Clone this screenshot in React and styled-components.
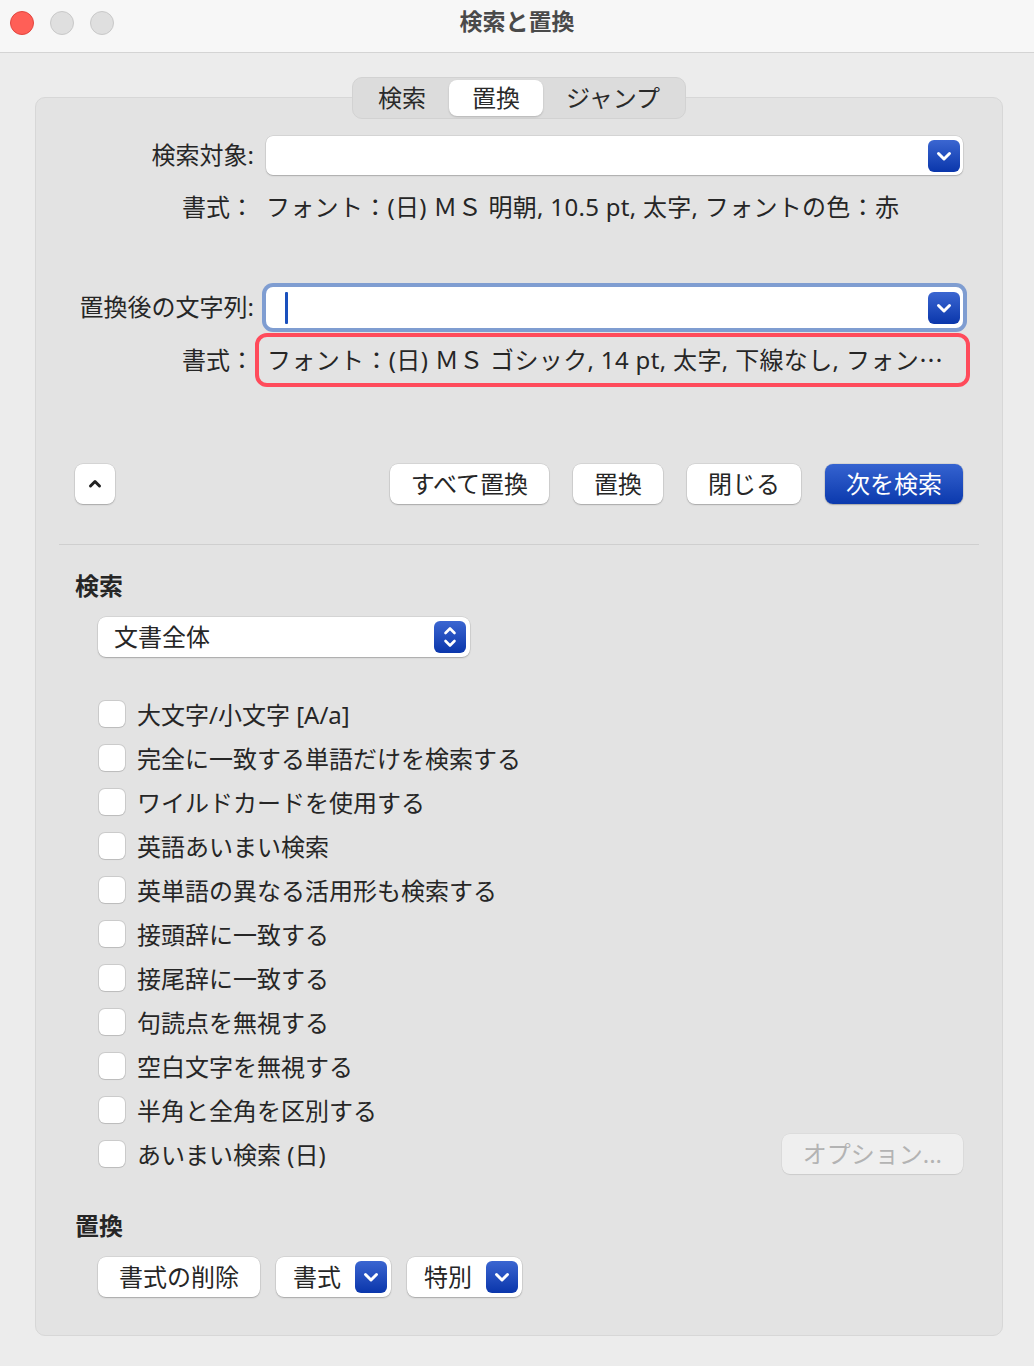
import React from 'react';
import styled, { createGlobalStyle } from 'styled-components';

const Global = createGlobalStyle`
  html, body { margin: 0; padding: 0; background: #ececec; }
  body {
    font-family: "Noto Sans", "Noto Sans CJK JP", sans-serif;
    color: #262626;
  }
`;

const Window = styled.div`
  width: 1034px;
  height: 1366px;
  background: #ececec;
  overflow: hidden;
`;

const TitleBar = styled.div`
  height: 52px;
  background: #f7f7f7;
  border-bottom: 1px solid #d4d4d4;
  display: grid;
  grid-template-columns: 1fr auto 1fr;
  align-items: center;
  padding: 0 10px;
`;

const Lights = styled.div`
  display: flex;
  gap: 16px;
  margin-top: -6px;
`;

const Light = styled.span`
  width: 24px;
  height: 24px;
  border-radius: 50%;
  box-sizing: border-box;
  background: ${p => (p.$red ? '#ff5f57' : '#dfdfdf')};
  border: 1px solid ${p => (p.$red ? '#e2463f' : '#c9c9c9')};
`;

const Title = styled.div`
  font-size: 23px;
  font-weight: 700;
  color: #4a4a4a;
  margin-top: -12px;
`;

const Body = styled.div`
  padding: 44px 31px 0 35px;
`;

const Panel = styled.div`
  background: #e3e3e3;
  border: 1px solid #d7d7d7;
  border-radius: 10px;
  padding: 0 39px 38px 39px;
  display: flex;
  flex-direction: column;
`;

const Tabs = styled.div`
  align-self: center;
  margin-top: -21px;
  height: 42px;
  box-sizing: border-box;
  padding: 2px;
  display: flex;
  background: #dcdcdc;
  border: 1px solid #d2d2d2;
  border-radius: 10px;
`;

const Tab = styled.div`
  padding: 0 23px 4px;
  display: flex;
  align-items: center;
  font-size: 24px;
  color: #2a2a2a;
  border-radius: 8px;
  background: ${p => (p.$active ? '#ffffff' : 'transparent')};
  box-shadow: ${p => (p.$active ? '0 1px 2px rgba(0,0,0,0.18)' : 'none')};
`;

const Row = styled.div`
  display: grid;
  grid-template-columns: 179px 1fr;
  column-gap: 12px;
  align-items: center;
  margin-top: ${p => p.$top}px;
`;

const Label = styled.div`
  text-align: right;
  font-size: 24px;
  line-height: 32px;
  white-space: nowrap;
  padding-bottom: 2px;
`;

const Field = styled.div`
  height: ${p => p.$h}px;
  background: #fff;
  border-radius: 7px;
  display: flex;
  align-items: center;
  justify-content: space-between;
  padding: 0 3px 0 19px;
  box-shadow: ${p =>
    p.$focus
      ? '0 0 0 4px #7f9dd1'
      : '0 0 0 0.5px rgba(0,0,0,0.12), 0 1px 1.5px rgba(0,0,0,0.2)'};
`;

const Caret = styled.span`
  width: 3px;
  height: 32px;
  background: #1a50bd;
  border-radius: 1px;
`;

const BlueBox = styled.span`
  width: 32px;
  height: 32px;
  border-radius: 6px;
  background: linear-gradient(#3b66d1, #0a36ab);
  display: flex;
  align-items: center;
  justify-content: center;
  flex: none;
`;

const FormatText = styled.div`
  font-size: 24px;
  line-height: 32px;
  white-space: nowrap;
  padding-bottom: 2px;
  letter-spacing: 0.3px;
`;

const RedBox = styled.div`
  height: 54px;
  box-sizing: border-box;
  margin: -2px -7px 0 -11px;
  border: 4px solid #ff4b5b;
  border-radius: 12px;
  padding: 0 0 4px 8px;
  display: flex;
  align-items: center;
  font-size: 24px;
  white-space: nowrap;
  letter-spacing: 0.35px;
`;

const ButtonRow = styled.div`
  display: flex;
  align-items: center;
  gap: ${p => p.$gap || 24}px;
  margin-top: ${p => p.$top}px;
  padding-left: ${p => p.$indent || 0}px;
`;

const Spacer = styled.div`
  flex: 1;
`;

const Button = styled.div`
  height: 40px;
  box-sizing: border-box;
  padding: ${p => (p.$menu ? '0 4px 0 17px' : p.$square ? '0' : '0 21px 3px')};
  width: ${p => (p.$square ? '40px' : 'auto')};
  display: flex;
  align-items: center;
  justify-content: center;
  gap: 14px;
  font-size: 24px;
  border-radius: 8px;
  color: ${p => (p.$primary ? '#fff' : p.$disabled ? '#b3b3b3' : '#262626')};
  background: ${p =>
    p.$primary ? 'linear-gradient(#3563d0, #0b39ad)' : p.$disabled ? '#efefef' : '#fff'};
  box-shadow: ${p =>
    p.$disabled
      ? '0 0 0 0.5px rgba(0,0,0,0.06), 0 1px 1px rgba(0,0,0,0.08)'
      : '0 0 0 0.5px rgba(0,0,0,0.12), 0 1px 1.5px rgba(0,0,0,0.22)'};
`;

const MenuLabel = styled.span`
  padding-bottom: 3px;
`;

const Separator = styled.div`
  height: 1px;
  background: #cfcfcf;
  margin: 40px -16px 0;
`;

const Heading = styled.div`
  font-size: 24px;
  font-weight: 700;
  line-height: 30px;
  margin-top: ${p => p.$top}px;
`;

const Select = styled.div`
  width: 372px;
  height: 40px;
  box-sizing: border-box;
  margin: 16px 0 0 23px;
  background: #fff;
  border-radius: 8px;
  box-shadow: 0 0 0 0.5px rgba(0,0,0,0.12), 0 1px 1.5px rgba(0,0,0,0.22);
  display: flex;
  align-items: center;
  justify-content: space-between;
  padding: 0 4px 0 16px;
  font-size: 24px;
`;

const SelectText = styled.span`
  padding-bottom: 3px;
`;

const CheckList = styled.div`
  margin: 35px 0 0 24px;
  display: flex;
  flex-direction: column;
`;

const CheckRow = styled.div`
  height: 44px;
  display: flex;
  align-items: center;
  gap: 12px;
  font-size: 24px;
`;

const CheckText = styled.span`
  padding-bottom: 2px;
`;

const Box = styled.span`
  width: 26px;
  height: 26px;
  border-radius: 6px;
  background: #fff;
  box-shadow: 0 0 0 1px rgba(0,0,0,0.1), 0 1px 1px rgba(0,0,0,0.08);
  flex: none;
`;

const Chevron = () => (
  <svg width="32" height="32" viewBox="0 0 32 32">
    <path d="M10.5 13.5 L16 19 L21.5 13.5" fill="none" stroke="#fff" strokeWidth="3" strokeLinecap="round" strokeLinejoin="round" />
  </svg>
);

const Stepper = () => (
  <svg width="32" height="32" viewBox="0 0 32 32">
    <path d="M11.5 12 L16 7.5 L20.5 12" fill="none" stroke="#fff" strokeWidth="2.6" strokeLinecap="round" strokeLinejoin="round" />
    <path d="M11.5 20 L16 24.5 L20.5 20" fill="none" stroke="#fff" strokeWidth="2.6" strokeLinecap="round" strokeLinejoin="round" />
  </svg>
);

const UpChevron = () => (
  <svg width="40" height="40" viewBox="0 0 40 40">
    <path d="M15.5 22 L20 17.5 L24.5 22" fill="none" stroke="#222" strokeWidth="3" strokeLinecap="round" strokeLinejoin="round" />
  </svg>
);

const options = [
  '大文字/小文字 [A/a]',
  '完全に一致する単語だけを検索する',
  'ワイルドカードを使用する',
  '英語あいまい検索',
  '英単語の異なる活用形も検索する',
  '接頭辞に一致する',
  '接尾辞に一致する',
  '句読点を無視する',
  '空白文字を無視する',
  '半角と全角を区別する',
  'あいまい検索 (日)',
];

export default function App() {
  return (
    <Window>
      <Global />
      <TitleBar>
        <Lights>
          <Light $red />
          <Light />
          <Light />
        </Lights>
        <Title>検索と置換</Title>
        <div />
      </TitleBar>
      <Body>
        <Panel>
          <Tabs>
            <Tab>検索</Tab>
            <Tab $active>置換</Tab>
            <Tab>ジャンプ</Tab>
          </Tabs>

          <Row $top={17}>
            <Label>検索対象:</Label>
            <Field $h={39}>
              <span />
              <BlueBox><Chevron /></BlueBox>
            </Field>
          </Row>
          <Row $top={16}>
            <Label>書式：</Label>
            <FormatText>フォント：(日) ＭＳ 明朝, 10.5 pt, 太字, フォントの色：赤</FormatText>
          </Row>

          <Row $top={62}>
            <Label>置換後の文字列:</Label>
            <Field $h={41} $focus>
              <Caret />
              <BlueBox><Chevron /></BlueBox>
            </Field>
          </Row>
          <Row $top={7}>
            <Label>書式：</Label>
            <RedBox>フォント：(日) ＭＳ ゴシック, 14 pt, 太字, 下線なし, フォン⋯</RedBox>
          </Row>

          <ButtonRow $top={77}>
            <Button $square><UpChevron /></Button>
            <Spacer />
            <Button>すべて置換</Button>
            <Button>置換</Button>
            <Button>閉じる</Button>
            <Button $primary>次を検索</Button>
          </ButtonRow>

          <Separator />

          <Heading $top={26}>検索</Heading>
          <Select>
            <SelectText>文書全体</SelectText>
            <BlueBox><Stepper /></BlueBox>
          </Select>

          <CheckList>
            {options.map((o, i) => (
              <CheckRow key={o}>
                <Box />
                <CheckText>{o}</CheckText>
                {i === options.length - 1 && (
                  <>
                    <Spacer />
                    <Button $disabled>オプション...</Button>
                  </>
                )}
              </CheckRow>
            ))}
          </CheckList>

          <Heading $top={35}>置換</Heading>
          <ButtonRow $top={16} $gap={16} $indent={23}>
            <Button>書式の削除</Button>
            <Button $menu><MenuLabel>書式</MenuLabel><BlueBox><Chevron /></BlueBox></Button>
            <Button $menu><MenuLabel>特別</MenuLabel><BlueBox><Chevron /></BlueBox></Button>
          </ButtonRow>
        </Panel>
      </Body>
    </Window>
  );
}
